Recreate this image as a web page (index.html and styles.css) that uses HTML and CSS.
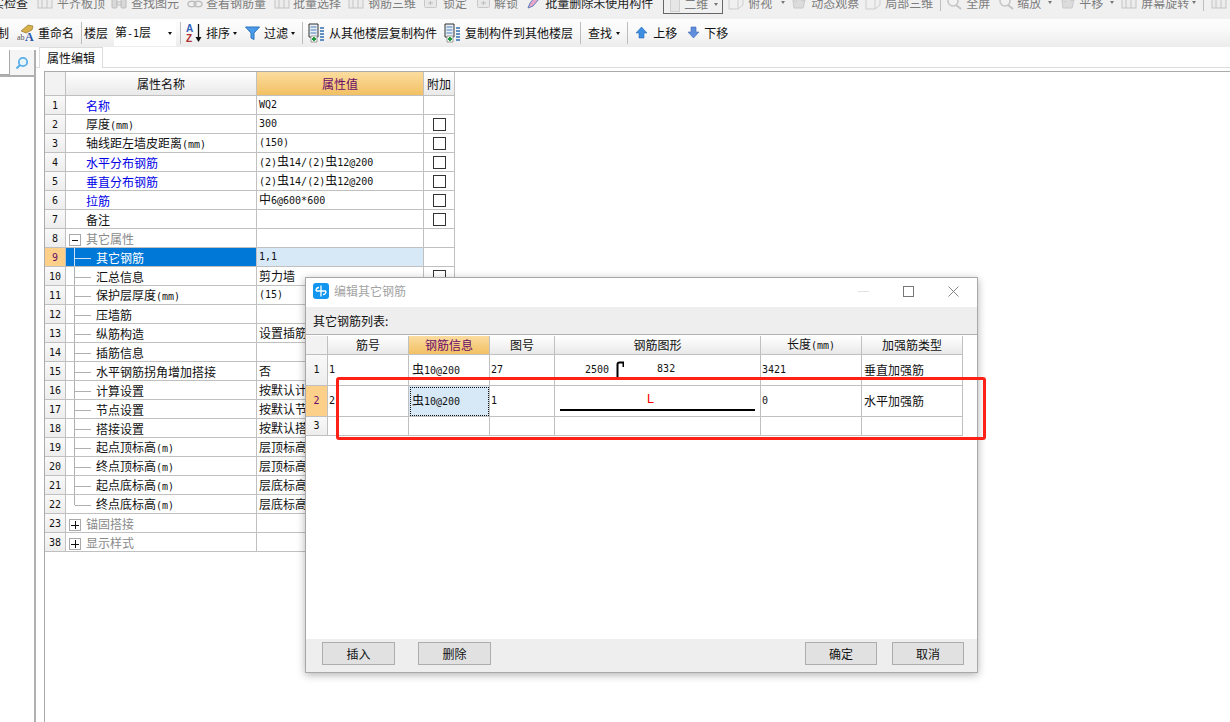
FILE: index.html
```html
<!DOCTYPE html>
<html lang="zh-CN">
<head>
<meta charset="utf-8">
<title>属性编辑</title>
<link rel="stylesheet" href="styles.css">
</head>
<body>
<svg class="defs" width="0" height="0" aria-hidden="true">
  <symbol id="i-sheet" viewBox="0 0 16 16"><rect x="1" y="1" width="14" height="13" fill="#ececec" stroke="#c4c4c4"/><path d="M1 5h14M5 1v13M10 1v13" stroke="#c4c4c4" fill="none"/></symbol>
  <symbol id="i-bino" viewBox="0 0 16 16"><rect x="1" y="5" width="5" height="9" rx="1" fill="#d8d8d8" stroke="#bdbdbd"/><rect x="10" y="5" width="5" height="9" rx="1" fill="#d8d8d8" stroke="#bdbdbd"/><path d="M6 8h4v3H6zM3 5V2h2M13 5V2h-2" fill="#e8e8e8" stroke="#bdbdbd"/></symbol>
  <symbol id="i-chain" viewBox="0 0 16 16"><ellipse cx="5" cy="10" rx="4" ry="2.800" fill="none" stroke="#c0c0c0" stroke-width="1.500"/><ellipse cx="11" cy="10" rx="4" ry="2.800" fill="none" stroke="#c0c0c0" stroke-width="1.500"/></symbol>
  <symbol id="i-glass" viewBox="0 0 16 16"><circle cx="7" cy="7" r="5" fill="#f2f2f2" stroke="#c4c4c4" stroke-width="1.500"/><path d="M10 11l5 4" stroke="#c4c4c4" stroke-width="2"/></symbol>
  <symbol id="i-key" viewBox="0 0 13 13"><rect x=".5" y="2.500" width="12" height="9" rx="1" fill="#e8e8e8" stroke="#c8c8c8"/><path d="M4 7h5M6.500 5v4" stroke="#bdbdbd"/></symbol>
  <symbol id="i-box" viewBox="0 0 16 16"><path d="M1 4l5-3h9v10l-5 4H1z" fill="#f0f0f0" stroke="#cdcdcd"/><path d="M1 4h9v11M10 4l5-3" stroke="#cdcdcd" fill="none"/></symbol>
  <symbol id="i-hand" viewBox="0 0 16 16"><path d="M3 14L2 6l3 2 1-6 2 4 2-5 1 6 3-1-2 8z" fill="#dcdcdc" stroke="#c8c8c8"/></symbol>
  <symbol id="i-doc" viewBox="0 0 17 20"><path d="M1 1h9v13H1z" fill="#e8eef5" stroke="#333"/><path d="M2.500 4h6M2.500 7h6M2.500 10h6" stroke="#4d7fb8"/><path d="M3 13h6v6H3z" fill="#fff" stroke="#999"/><path d="M6 14v4M4 16h4" stroke="#1f9a3d" stroke-width="2"/><path d="M12 5h4M12 8h4M12 11h4M12 14h4M12 17h4" stroke="#2f6fb0" stroke-width="1.500"/></symbol>
  <symbol id="i-up" viewBox="0 0 13 13"><path d="M6.500 1L12 7H9v5H4V7H1z" fill="#3d8de0" stroke="#2a6cb8" stroke-width=".6"/></symbol>
  <symbol id="i-down" viewBox="0 0 13 13"><path d="M6.500 12L12 6H9V1H4v5H1z" fill="#5f8fdc" stroke="#3f6ab8" stroke-width=".6"/></symbol>
</svg>

<div class="app">
  <div class="tb tb-top">
    <span class="dark ml-n8">实检查</span>
    <svg class="ic ml9"><use href="#i-sheet"/></svg><span class="ml4">平齐板顶</span>
    <svg class="ic ml6"><use href="#i-bino"/></svg><span class="ml4">查找图元</span>
    <svg class="ic ml8"><use href="#i-chain"/></svg><span class="ml3">查看钢筋量</span>
    <svg class="ic ml8"><use href="#i-sheet"/></svg><span class="ml3">批量选择</span>
    <svg class="ic ml7"><use href="#i-sheet"/></svg><span class="ml4">钢筋三维</span>
    <svg class="ic-s ml8"><use href="#i-key"/></svg><span class="ml6">锁定</span>
    <svg class="ic-s ml10"><use href="#i-key"/></svg><span class="ml4">解锁</span>
    <svg class="ic-m ml9" viewBox="0 0 14 16"><path d="M1 14l2-5 6-7 3 3-6 7z" fill="#e8a5c8" stroke="#5f7fc0"/><path d="M9 2l2-1 2 2-1 2z" fill="#3d6fc0"/></svg><span class="dark ml4">批量删除未使用构件</span>
    <span class="combo ml10"><span class="combo-chip"></span><span class="combo-text">二维</span><i class="caret caret-grey"></i></span>
    <svg class="ic ml5"><use href="#i-box"/></svg><span class="ml4">俯视</span><i class="caret caret-grey ml9"></i>
    <svg class="ic ml6"><use href="#i-hand"/></svg><span class="ml4">动态观察</span>
    <svg class="ic ml6"><use href="#i-box"/></svg><span class="ml4">局部三维</span>
    <i class="sep sep-top ml7"></i>
    <svg class="ic ml5"><use href="#i-glass"/></svg><span class="ml4">全屏</span>
    <svg class="ic ml8"><use href="#i-glass"/></svg><span class="ml3">缩放</span><i class="caret caret-grey ml7"></i>
    <svg class="ic ml8"><use href="#i-hand"/></svg><span class="ml3">平移</span><i class="caret caret-grey ml7"></i>
    <svg class="ic ml7"><use href="#i-sheet"/></svg><span class="ml4">屏幕旋转</span><i class="caret caret-grey ml3"></i>
    <i class="sep sep-top ml7"></i>
    <svg class="ic ml7"><use href="#i-sheet"/></svg>
  </div>

  <div class="tb tb-main">
    <span class="ml-n3">制</span>
    <svg class="ic-l ml8" viewBox="0 0 17 20"><path d="M4 8l7-6 5 1-1 4-6 3z" fill="#d8b04a" stroke="#8a6a20" stroke-width=".6"/><text x="0" y="17" class="ic-ab">ab</text><text x="8" y="18" class="ic-a">A</text></svg>
    <span class="ml4">重命名</span>
    <i class="sep ml7"></i>
    <span class="ml2">楼层</span>
    <span class="floor ml6"><span>第<span class="mono">-1</span>层</span><i class="caret"></i></span>
    <i class="sep ml4"></i>
    <svg class="ic-az ml5" viewBox="0 0 17 20"><text x="0" y="9" class="az-a">A</text><text x="0" y="19" class="az-z">Z</text><path d="M12.500 1v15" stroke="#111" stroke-width="1.300"/><path d="M9.500 14h6l-3 5z" fill="#111"/></svg>
    <span class="ml3">排序</span><i class="caret ml3"></i>
    <svg class="ic-f ml8" viewBox="0 0 15 14"><path d="M.5 1h14L9 7v6.500L6 12V7z" fill="#4a9be8" stroke="#2f74c0"/></svg>
    <span class="ml4">过滤</span><i class="caret ml3"></i>
    <i class="sep ml7"></i>
    <svg class="ic-l ml5"><use href="#i-doc"/></svg>
    <span class="ml4">从其他楼层复制构件</span>
    <svg class="ic-l ml7"><use href="#i-doc"/></svg>
    <span class="ml4">复制构件到其他楼层</span>
    <i class="sep ml7"></i>
    <span class="ml7">查找</span><i class="caret ml4"></i>
    <i class="sep ml7"></i>
    <svg class="ic-s ml7"><use href="#i-up"/></svg><span class="ml5">上移</span>
    <svg class="ic-s ml10"><use href="#i-down"/></svg><span class="ml4">下移</span>
  </div>

  <div class="work">
    <aside class="side">
      <div class="search">
        <div class="search-input"></div>
        <svg class="search-ic" viewBox="0 0 14 14"><circle cx="8" cy="6" r="4.200" fill="#e8f4fc" stroke="#5aaee8" stroke-width="1.800"/><path d="M5 9l-3.500 3.500" stroke="#5aaee8" stroke-width="2.200"/></svg>
      </div>
    </aside>
    <main class="main">
      <div class="tabs"><div class="tab">属性编辑</div></div>
      <div class="frame">
        <table class="grid props">
          <colgroup><col class="pc1"><col class="pc2"><col class="pc3"><col class="pc4"></colgroup>
          <thead><tr><th class="corner"></th><th>属性名称</th><th class="hot">属性值</th><th>附加</th></tr></thead>
          <tbody>
            <tr><td class="no">1</td><td class="nm link">名称</td><td class="val mono">WQ2</td><td></td></tr>
            <tr><td class="no">2</td><td class="nm">厚度<span class="mono">(mm)</span></td><td class="val mono">300</td><td class="chk"><i></i></td></tr>
            <tr><td class="no">3</td><td class="nm">轴线距左墙皮距离<span class="mono">(mm)</span></td><td class="val mono">(150)</td><td class="chk"><i></i></td></tr>
            <tr><td class="no">4</td><td class="nm link">水平分布钢筋</td><td class="val mono">(2)<span class="sym">虫</span>14/(2)<span class="sym">虫</span>12@200</td><td class="chk"><i></i></td></tr>
            <tr><td class="no">5</td><td class="nm link">垂直分布钢筋</td><td class="val mono">(2)<span class="sym">虫</span>14/(2)<span class="sym">虫</span>12@200</td><td class="chk"><i></i></td></tr>
            <tr><td class="no">6</td><td class="nm link">拉筋</td><td class="val mono"><span class="sym">中</span>6@600*600</td><td class="chk"><i></i></td></tr>
            <tr><td class="no">7</td><td class="nm">备注</td><td class="val"></td><td class="chk"><i></i></td></tr>
            <tr><td class="no">8</td><td class="nm group"><i class="tog minus"></i>其它属性</td><td></td><td></td></tr>
            <tr class="sel"><td class="no">9</td><td class="nm child">其它钢筋</td><td class="val mono">1,1</td><td></td></tr>
            <tr><td class="no">10</td><td class="nm child">汇总信息</td><td class="val">剪力墙</td><td class="chk"><i></i></td></tr>
            <tr><td class="no">11</td><td class="nm child">保护层厚度<span class="mono">(mm)</span></td><td class="val mono">(15)</td><td></td></tr>
            <tr><td class="no">12</td><td class="nm child">压墙筋</td><td class="val"></td><td></td></tr>
            <tr><td class="no">13</td><td class="nm child">纵筋构造</td><td class="val">设置插筋</td><td></td></tr>
            <tr><td class="no">14</td><td class="nm child">插筋信息</td><td class="val"></td><td></td></tr>
            <tr><td class="no">15</td><td class="nm child">水平钢筋拐角增加搭接</td><td class="val">否</td><td></td></tr>
            <tr><td class="no">16</td><td class="nm child">计算设置</td><td class="val">按默认计算设置</td><td></td></tr>
            <tr><td class="no">17</td><td class="nm child">节点设置</td><td class="val">按默认节点设置</td><td></td></tr>
            <tr><td class="no">18</td><td class="nm child">搭接设置</td><td class="val">按默认搭接设置</td><td></td></tr>
            <tr><td class="no">19</td><td class="nm child">起点顶标高<span class="mono">(m)</span></td><td class="val">层顶标高</td><td></td></tr>
            <tr><td class="no">20</td><td class="nm child">终点顶标高<span class="mono">(m)</span></td><td class="val">层顶标高</td><td></td></tr>
            <tr><td class="no">21</td><td class="nm child">起点底标高<span class="mono">(m)</span></td><td class="val">层底标高</td><td></td></tr>
            <tr><td class="no">22</td><td class="nm child last">终点底标高<span class="mono">(m)</span></td><td class="val">层底标高</td><td></td></tr>
            <tr><td class="no">23</td><td class="nm group"><i class="tog plus"></i>锚固搭接</td><td></td><td></td></tr>
            <tr><td class="no">38</td><td class="nm group"><i class="tog plus"></i>显示样式</td><td></td><td></td></tr>
          </tbody>
        </table>
      </div>
    </main>
  </div>

  <section class="dialog">
    <header class="dlg-title">
      <svg class="dlg-logo" viewBox="0 0 16 16"><rect width="16" height="16" rx="3" fill="#1296f0"/><path d="M8 2.500v11M3 8h10M6 4.500c-2 0-3 1.500-3 3.500M10 11.500c2 0 3-1.500 3-3.500" stroke="#fff" stroke-width="1.300" fill="none"/></svg>
      <span class="dlg-name">编辑其它钢筋</span>
      <svg class="win win-min" viewBox="0 0 11 11"><path d="M0 5.500h11" stroke="#e2e2e2"/></svg>
      <svg class="win win-max" viewBox="0 0 11 11"><rect x=".5" y=".5" width="10" height="10" fill="none" stroke="#777"/></svg>
      <svg class="win win-close" viewBox="0 0 11 11"><path d="M.5.500l10 10M10.500.500l-10 10" stroke="#888"/></svg>
    </header>
    <div class="dlg-label">其它钢筋列表:</div>
    <div class="dlg-body">
      <table class="grid rebar">
        <colgroup><col class="rc1"><col class="rc2"><col class="rc2"><col class="rc3"><col class="rc4"><col class="rc5"><col class="rc5"></colgroup>
        <thead><tr><th class="corner"></th><th>筋号</th><th class="hot">钢筋信息</th><th>图号</th><th>钢筋图形</th><th>长度<span class="mono">(mm)</span></th><th>加强筋类型</th></tr></thead>
        <tbody>
          <tr class="tall"><td class="no">1</td><td class="val mono">1</td><td class="val mono info"><span class="sym">虫</span>10@200</td><td class="val mono">27</td>
            <td class="shape"><div class="shape-one"><span class="mono">2500</span><svg class="hook" viewBox="0 0 8 19"><path d="M1.500 19V3.500c0-1 .6-2 2-2H7.500V6" fill="none" stroke="#000" stroke-width="2"/></svg><span class="mono raised">832</span></div></td>
            <td class="val mono">3421</td><td class="val">垂直加强筋</td></tr>
          <tr class="tall"><td class="no cur">2</td><td class="val mono">2</td><td class="val mono info focus"><span class="sym">虫</span>10@200</td><td class="val mono">1</td>
            <td class="shape"><div class="shape-two"><span class="letter">L</span><i class="bar"></i></div></td>
            <td class="val mono">0</td><td class="val">水平加强筋</td></tr>
          <tr><td class="no">3</td><td></td><td></td><td></td><td></td><td></td><td></td></tr>
        </tbody>
      </table>
    </div>
    <footer class="dlg-foot">
      <button class="btn">插入</button>
      <button class="btn">删除</button>
      <span class="grow"></span>
      <button class="btn btn-n">确定</button>
      <button class="btn btn-n">取消</button>
    </footer>
  </section>
  <div class="redbox"></div>
</div>
</body>
</html>
```
FILE: styles.css
```css
* { box-sizing: border-box; }
html, body { margin: 0; padding: 0; background: #fff; }
body { font: 12px/16px "Noto Sans CJK SC", "Liberation Sans", sans-serif; color: #111; }
.defs { display: block; height: 0; }
.app { position: relative; width: 1230px; height: 722px; overflow: hidden; display: flex; flex-direction: column; }

.mono { font-family: "DejaVu Sans Mono", "Liberation Mono", monospace; font-size: 10px; }
.sym { font-family: "Noto Sans CJK SC", sans-serif; font-size: 12px; }

.ml-n8 { margin-left: -8px; } .ml-n3 { margin-left: -3px; }
.ml2 { margin-left: 2px; } .ml3 { margin-left: 3px; } .ml4 { margin-left: 4px; } .ml5 { margin-left: 5px; }
.ml6 { margin-left: 6px; } .ml7 { margin-left: 7px; } .ml8 { margin-left: 8px; } .ml9 { margin-left: 9px; } .ml10 { margin-left: 10px; }

/* toolbars */
.tb { display: flex; align-items: center; white-space: nowrap; flex: none; }
.tb > * { flex: none; }
.tb-top { height: 19px; background: #f0f0f0; color: #7d7d7d; align-items: flex-end; padding-bottom: 8px; overflow: hidden; }
.tb-top .dark { color: #222; }
.tb-main { height: 28px; background: linear-gradient(#fdfdfd, #fafafa 35%, #ececec); }
.ic { width: 16px; height: 16px; margin-bottom: 1px; }
.ic-s { width: 13px; height: 13px; }
.ic-m { width: 14px; height: 16px; margin-bottom: 1px; }
.ic-l { width: 17px; height: 20px; }
.ic-az { width: 17px; height: 20px; }
.ic-f { width: 15px; height: 14px; }
.ic-ab { font: 8px "Liberation Serif", serif; fill: #555; }
.ic-a { font: bold 12px "Liberation Serif", serif; fill: #2a55a8; }
.az-a { font: bold 10px "Liberation Sans", sans-serif; fill: #2f62b8; }
.az-z { font: bold 10px "Liberation Sans", sans-serif; fill: #b03030; }
.tb-top .ic-s { margin-bottom: 2px; }
.tb-main .ic-s { margin-top: -2px; }

.caret { display: block; width: 0; height: 0; border-style: solid; border-width: 3px 2.500px 0; border-color: #111 transparent transparent; }
.caret-grey { border-top-color: #777; margin-bottom: 7px; }
.sep { display: block; width: 1px; height: 22px; background: #bdbdbd; }
.sep-top { height: 24px; }

.combo { display: flex; align-items: flex-end; width: 60px; height: 24px; margin-bottom: -3px; padding: 0 4px 1px 6px; border: 1px solid #666; }
.combo-chip { width: 10px; height: 14px; background: #e6e6e6; border: 1px solid #cfcfcf; }
.combo-text { margin-left: 4px; }
.combo .caret { margin: 0 0 6px auto; }

.floor { display: flex; align-items: center; justify-content: space-between; width: 62px; height: 25px; padding: 0 4px 0 1px; background: #fff; }

/* workspace */
.work { flex: 1; display: flex; min-height: 0; }
.side { width: 36px; flex: none; border-right: 2px solid #b0b0b0; margin-top: 3px; }
.search { display: flex; align-items: center; height: 27px; border-bottom: 2px solid #b0b0b0; background: #f5f5f5; }
.search-input { width: 10px; height: 25px; background: #fff; border: solid #a9a9a9; border-width: 0 1px 1px 0; }
.search-ic { width: 14px; height: 14px; margin-left: 5px; }

.main { flex: 1; min-width: 0; display: flex; flex-direction: column; }
.tabs { height: 21px; flex: none; padding-left: 3px; border-bottom: 1px solid #dcdcdc; }
.tab { width: 64px; height: 21px; padding-left: 7px; line-height: 20px; font-size: 12px; background: #fff; border: solid #dcdcdc; border-width: 1px 1px 0; }
.frame { flex: 1; margin: 3px 0 0 8px; border-top: 1px solid #ababab; border-left: 1px solid #ababab; }

/* grids */
.grid { border-collapse: separate; border-spacing: 0; table-layout: fixed; }
.grid th, .grid td { padding: 0; border: solid #c0c0c0; border-width: 0 1px 1px 0; white-space: nowrap; overflow: hidden; }
.grid th { font-weight: 400; text-align: center; background: linear-gradient(#fff, #e9e9e9); }
.grid th.hot { color: #6a0a6a; background: linear-gradient(#fbdc9f, #f2c063); }
.grid th.corner { background: #f2f2f2; }
.props { width: 410px; }
.pc1 { width: 21px; } .pc2 { width: 191px; } .pc3 { width: 167px; } .pc4 { width: 31px; }
.props thead tr { height: 24px; }
.props tbody tr { height: 19px; }
.props tbody td { line-height: 14px; }
.grid .no { text-align: center; background: linear-gradient(#f9f9f9, #ededed); font-family: "DejaVu Sans Mono", monospace; font-size: 10px; }
.props tbody .no { padding-top: 2px; }
.val { padding-left: 2px !important; }
.nm { padding: 2px 0 0 20px !important; }
.link { color: #0000e6; }
.group { color: #8a8a8a; padding-left: 3px !important; }
.tog { display: inline-block; width: 12px; height: 12px; margin-right: 5px; vertical-align: -2px; border: 1px solid #aaa; background-color: #fff; background-repeat: no-repeat; background-position: center; }
.minus { background-image: linear-gradient(#111, #111); background-size: 6px 1px; }
.plus { background-image: linear-gradient(#111, #111), linear-gradient(#111, #111); background-size: 8px 1px, 1px 8px; }
.child { padding-left: 30px !important; background:
  linear-gradient(#b0b0b0, #b0b0b0) 8px 0 / 1px 100% no-repeat,
  linear-gradient(#b0b0b0, #b0b0b0) 9px 10px / 16px 1px no-repeat; }
.child.last { background:
  linear-gradient(#b0b0b0, #b0b0b0) 8px 0 / 1px 10px no-repeat,
  linear-gradient(#b0b0b0, #b0b0b0) 9px 10px / 16px 1px no-repeat; }
.chk { text-align: center; line-height: 0 !important; }
.chk i { display: inline-block; width: 13px; height: 13px; border: 1px solid #333; background: #fff; vertical-align: middle; }
.sel .no, .grid .no.cur { background: #fdd08a; color: #6a0a6a; }
.sel .nm { color: #fff; background:
  linear-gradient(#cfe2f5, #cfe2f5) 8px 0 / 1px 100% no-repeat,
  linear-gradient(#cfe2f5, #cfe2f5) 9px 10px / 16px 1px no-repeat,
  #0078d7; }
.sel .val { background: #d7e8f7; }

/* dialog */
.dialog { position: absolute; left: 305px; top: 277px; width: 673px; height: 396px; display: flex; flex-direction: column; background: #fff; border: 1px solid #a8a8a8; box-shadow: 0 2px 8px rgba(0, 0, 0, .3); }
.dlg-title { display: flex; align-items: center; height: 29px; flex: none; padding: 0 0 3px 7px; }
.dlg-logo { width: 16px; height: 16px; }
.dlg-name { margin-left: 5px; color: #a3a3a3; }
.win { width: 11px; height: 11px; }
.win-min { margin-left: auto; }
.win-max { margin-left: 34px; }
.win-close { margin: 0 18px 0 34px; }
.dlg-label { height: 28px; flex: none; padding: 6px 0 0 7px; background: #eee; border-bottom: 1px solid #b0b0b0; }
.dlg-body { flex: 1; min-height: 0; padding-top: 1px; }
.rebar { width: 657px; }
.rc1 { width: 22px; } .rc2 { width: 81px; } .rc3 { width: 65px; } .rc4 { width: 206px; } .rc5 { width: 101px; }
.rebar thead tr { height: 19px; }
.rebar tbody tr { height: 19px; }
.rebar tbody tr.tall { height: 31px; }
.grid td.focus { background: #d7e8f7; outline: 1px dotted #111; outline-offset: -2px; }
.rebar .val { padding-left: 2px !important; }
.rebar .val.mono { padding-left: 1px !important; }
.rebar .val.info { padding-left: 3px !important; }
.shape-one { display: flex; align-items: center; padding-left: 30px; height: 30px; }
.hook { width: 8px; height: 19px; margin-left: 7px; }
.raised { margin: -3px 0 0 33px; }
.shape-two { display: flex; flex-direction: column; align-items: center; height: 30px; padding: 5px 5px 0; }
.letter { margin-right: 14px; color: #f00; font: 400 13px/17px "Liberation Mono", monospace; }
.bar { display: block; width: 195px; height: 2px; margin-top: 1px; background: #000; }

.dlg-foot { display: flex; gap: 23px; height: 33px; flex: none; padding: 3px 13px 0 16px; background: #eee; }
.grow { flex: 1; margin-left: -23px; }
.btn { width: 73px; height: 23px; padding: 0; font: inherit; color: #111; background: #e1e1e1; border: 1px solid #adadad; border-radius: 0; }
.btn-n { width: 72px; }
.btn:last-child { margin-left: -8px; }

.redbox { position: absolute; left: 336px; top: 377px; width: 650px; height: 63px; border: 3px solid #ff2016; border-radius: 3px; }
```
